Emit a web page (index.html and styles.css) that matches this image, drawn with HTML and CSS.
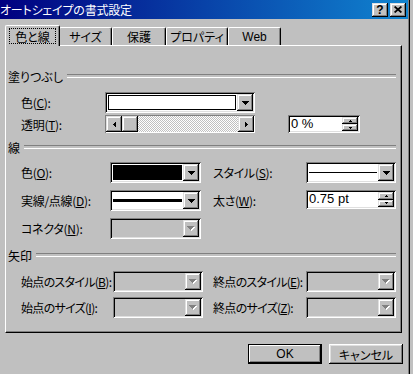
FILE: index.html
```html
<!DOCTYPE html>
<html lang="ja">
<head>
  <meta charset="UTF-8" />
  <meta name="viewport" content="width=device-width, initial-scale=1.0" />
  <title>オートシェイプの書式設定</title>
  <link rel="stylesheet" href="styles.css">
</head>
<body>

  <div class="dialog">
    <div class="titlebar">
      <span class="title">オートシェイプの書式設定</span>
      <div class="caption-buttons">
        <span class="cap-btn help">?</span>
        <span class="cap-btn close">
          <svg width="8" height="7" viewBox="0 0 8 7"><path d="M0.6 0.5 L7.4 6.5 M7.4 0.5 L0.6 6.5" stroke="#000" stroke-width="1.7" /></svg>
        </span>
      </div>
    </div>

    <div class="tabs">
      <div class="tab active"><span class="focus">色と線</span></div>
      <div class="tab t-size">サイズ</div>
      <div class="tab t-lock">保護</div>
      <div class="tab t-prop">プロパティ</div>
      <div class="tab t-web">Web</div>
    </div>

    <div class="panel">
      <div class="group">塗りつぶし</div>

      <div class="row fill-color">
        <label>色(<u>C</u>):</label>
        <div class="combo">
          <span class="swatch white"></span>
          <span class="drop"><svg width="7" height="4" viewBox="0 0 7 4"><path d="M0 0h7v1h-1v1h-1v1h-1v1h-1v-1h-1v-1h-1v-1h-1z" /></svg></span>
        </div>
      </div>

      <div class="row fill-alpha">
        <label>透明(<u>T</u>):</label>
        <div class="scroll">
          <span class="sbtn"><svg width="3" height="5" viewBox="0 0 3 5"><path d="M2 0h1v5h-1v-1h-1v-1h-1v-1h1v-1h1z" /></svg></span>
          <span class="sbtn thumb"></span>
          <span class="track"></span>
          <span class="sbtn"><svg width="3" height="5" viewBox="0 0 3 5"><path d="M0 0h1v1h1v1h1v1h-1v1h-1v1h-1z" /></svg></span>
        </div>
        <span></span>
        <div class="spin">
          <span class="val">0 %</span>
          <span class="arrows">
            <span><svg width="3" height="2" viewBox="0 0 3 2"><path d="M1 0h1v1h1v1h-3v-1h1z" /></svg></span>
            <span><svg width="3" height="2" viewBox="0 0 3 2"><path d="M0 0h3v1h-1v1h-1v-1h-1z" /></svg></span>
          </span>
        </div>
      </div>

      <div class="group line-group">線</div>

      <div class="row line-row first">
        <label>色(<u>O</u>):</label>
        <div class="combo">
          <span class="swatch black"></span>
          <span class="drop"><svg width="7" height="4" viewBox="0 0 7 4"><path d="M0 0h7v1h-1v1h-1v1h-1v1h-1v-1h-1v-1h-1v-1h-1z" /></svg></span>
        </div>
        <span></span>
        <label>スタイル(<u>S</u>):</label>
        <div class="combo">
          <span class="stroke thin"></span>
          <span class="drop"><svg width="7" height="4" viewBox="0 0 7 4"><path d="M0 0h7v1h-1v1h-1v1h-1v1h-1v-1h-1v-1h-1v-1h-1z" /></svg></span>
        </div>
      </div>

      <div class="row line-row">
        <label>実線/点線(<u>D</u>):</label>
        <div class="combo">
          <span class="stroke thick"></span>
          <span class="drop"><svg width="7" height="4" viewBox="0 0 7 4"><path d="M0 0h7v1h-1v1h-1v1h-1v1h-1v-1h-1v-1h-1v-1h-1z" /></svg></span>
        </div>
        <span></span>
        <label>太さ(<u>W</u>):</label>
        <div class="spin weight">
          <span class="val">0.75 pt</span>
          <span class="arrows">
            <span><svg width="3" height="2" viewBox="0 0 3 2"><path d="M1 0h1v1h1v1h-3v-1h1z" /></svg></span>
            <span><svg width="3" height="2" viewBox="0 0 3 2"><path d="M0 0h3v1h-1v1h-1v-1h-1z" /></svg></span>
          </span>
        </div>
      </div>

      <div class="row line-row">
        <label>コネクタ(<u>N</u>):</label>
        <div class="combo disabled">
          <span class="empty"></span>
          <span class="drop"><svg width="8" height="5" viewBox="0 0 8 5"><path fill="#fff" d="M1 1h7v1h-1v1h-1v1h-1v1h-1v-1h-1v-1h-1v-1h-1z" /><path fill="#808080" d="M0 0h7v1h-1v1h-1v1h-1v1h-1v-1h-1v-1h-1v-1h-1z" /></svg></span>
        </div>
      </div>

      <div class="group arrow-group">矢印</div>

      <div class="row arrow-row first">
        <label>始点のスタイル(<u>B</u>):</label>
        <div class="combo disabled">
          <span class="empty"></span>
          <span class="drop"><svg width="8" height="5" viewBox="0 0 8 5"><path fill="#fff" d="M1 1h7v1h-1v1h-1v1h-1v1h-1v-1h-1v-1h-1v-1h-1z" /><path fill="#808080" d="M0 0h7v1h-1v1h-1v1h-1v1h-1v-1h-1v-1h-1v-1h-1z" /></svg></span>
        </div>
        <span></span>
        <label>終点のスタイル(<u>E</u>):</label>
        <div class="combo disabled">
          <span class="empty"></span>
          <span class="drop"><svg width="8" height="5" viewBox="0 0 8 5"><path fill="#fff" d="M1 1h7v1h-1v1h-1v1h-1v1h-1v-1h-1v-1h-1v-1h-1z" /><path fill="#808080" d="M0 0h7v1h-1v1h-1v1h-1v1h-1v-1h-1v-1h-1v-1h-1z" /></svg></span>
        </div>
      </div>

      <div class="row arrow-row second">
        <label>始点のサイズ(<u>I</u>):</label>
        <div class="combo disabled">
          <span class="empty"></span>
          <span class="drop"><svg width="8" height="5" viewBox="0 0 8 5"><path fill="#fff" d="M1 1h7v1h-1v1h-1v1h-1v1h-1v-1h-1v-1h-1v-1h-1z" /><path fill="#808080" d="M0 0h7v1h-1v1h-1v1h-1v1h-1v-1h-1v-1h-1v-1h-1z" /></svg></span>
        </div>
        <span></span>
        <label>終点のサイズ(<u>Z</u>):</label>
        <div class="combo disabled">
          <span class="empty"></span>
          <span class="drop"><svg width="8" height="5" viewBox="0 0 8 5"><path fill="#fff" d="M1 1h7v1h-1v1h-1v1h-1v1h-1v-1h-1v-1h-1v-1h-1z" /><path fill="#808080" d="M0 0h7v1h-1v1h-1v1h-1v1h-1v-1h-1v-1h-1v-1h-1z" /></svg></span>
        </div>
      </div>
    </div>

    <div class="buttons">
      <div class="btn default">OK</div>
      <div class="btn">キャンセル</div>
    </div>
  </div>

</body>
</html>
```

FILE: styles.css
```css
* {
  box-sizing: border-box;
}
body {
  margin: 0;
  width: 413px;
  height: 374px;
  overflow: hidden;
  background: #c0c0c0;
  color: #000;
  font-family: 'Noto Sans CJK JP', sans-serif;
  font-size: 12px;
  font-feature-settings: "palt";
}
u {
  text-decoration-thickness: 1px;
  text-underline-offset: 1px;
}

.dialog {
  width: 410px;
  height: 374px;
  padding-right: 2px;
  box-shadow: inset -1px 0 #000, inset -2px 0 #808080;
}

.titlebar {
  display: flex;
  align-items: center;
  height: 19px;
  padding-right: 2px;
  background: linear-gradient(90deg, #000080, #1084d0);
  color: #fff;
}
.title {
  flex: 1;
  font-size: 12px;
  white-space: nowrap;
  line-height: 19px;
  letter-spacing: -0.2px;
}
.caption-buttons {
  display: flex;
  gap: 2px;
}
.cap-btn {
  display: flex;
  align-items: center;
  justify-content: center;
  width: 16px;
  height: 14px;
  background: #c0c0c0;
  color: #000;
  box-shadow: inset -1px -1px #000, inset 1px 1px #dfdfdf, inset -2px -2px #808080, inset 2px 2px #fff;
}
.help {
  font-family: 'Liberation Sans', sans-serif;
  font-weight: bold;
  font-size: 12px;
  line-height: 14px;
}

/* tabs */
.tabs {
  display: flex;
  align-items: flex-end;
  height: 20px;
  margin-top: 6px;
  padding-left: 7px;
}
.tab {
  display: flex;
  align-items: center;
  justify-content: center;
  height: 18px;
  background: #c0c0c0;
  border-top: 1px solid #fff;
  border-left: 1px solid #fff;
  border-right: 1px solid #000;
  border-radius: 2px 2px 0 0;
  box-shadow: inset -1px 0 #808080;
  white-space: nowrap;
}
.tab.active {
  position: relative;
  z-index: 1;
  width: 55px;
  height: 21px;
  margin: 0 -1px -1px -2px;
}
.focus {
  display: flex;
  align-items: center;
  justify-content: center;
  width: 47px;
  height: 16px;
  border: 1px dotted #000;
}
.t-size { width: 53px; }
.t-lock { width: 54px; }
.t-prop { width: 62px; }
.t-web  { width: 53px; font-family: 'Liberation Sans', sans-serif; }

/* panel */
.panel {
  width: 397px;
  height: 288px;
  margin-left: 5px;
  padding: 22px 5px 0 2px;
  border-top: 1px solid #fff;
  border-left: 1px solid #fff;
  border-right: 1px solid #000;
  border-bottom: 1px solid #000;
  box-shadow: inset -1px -1px #808080;
}
.group {
  display: flex;
  align-items: center;
  gap: 4px;
  height: 16px;
}
.group::after {
  content: "";
  flex: 1;
  height: 2px;
  border-top: 1px solid #808080;
  border-bottom: 1px solid #fff;
}
.line-group { margin-top: 6px; }
.arrow-group { margin-top: 8px; }

.row {
  display: grid;
  align-items: center;
  height: 21px;
  padding-left: 13px;
}
.row label {
  white-space: nowrap;
  letter-spacing: -0.3px;
}
.fill-color {
  margin-top: 8px;
  grid-template-columns: 84px 150px;
}
.fill-alpha {
  margin-top: 2px;
  height: 18px;
  grid-template-columns: 84px 150px 33px 72px;
}
.line-row {
  margin-top: 7px;
  grid-template-columns: 89px 91px 12px 93px 90px;
}
.arrow-row {
  grid-template-columns: 92px 90px 10px 93px 90px;
}
.arrow-row label {
  letter-spacing: -0.7px;
}
.arrow-row.first { margin-top: 8px; }
.arrow-row.second { margin-top: 5px; }

/* controls */
.combo {
  display: flex;
  height: 21px;
  padding: 2px;
  background: #fff;
  box-shadow: inset 1px 1px #808080, inset -1px -1px #fff, inset 2px 2px #000, inset -2px -2px #dfdfdf;
}
.combo.disabled {
  background: #c0c0c0;
}
.swatch {
  flex: 1;
  margin: 1px;
  border: 1px solid #000;
}
.swatch.white { background: #fff; }
.swatch.black { background: #000; }
.stroke {
  flex: 1;
  align-self: center;
  margin: 0 1px;
  background: #000;
}
.stroke.thin { height: 1px; }
.stroke.thick { height: 3px; }
.empty {
  flex: 1;
}
.drop {
  display: flex;
  align-items: center;
  justify-content: center;
  width: 16px;
  background: #c0c0c0;
  box-shadow: inset -1px -1px #000, inset 1px 1px #dfdfdf, inset -2px -2px #808080, inset 2px 2px #fff;
}

.scroll {
  display: flex;
  align-self: end;
  height: 18px;
  padding: 1px;
  box-shadow: inset 1px 1px #808080, inset -1px -1px #fff;
}
.sbtn {
  display: flex;
  align-items: center;
  justify-content: center;
  width: 16px;
  background: #c0c0c0;
  box-shadow: inset -1px -1px #000, inset 1px 1px #dfdfdf, inset -2px -2px #808080, inset 2px 2px #fff;
}
.track {
  flex: 1;
  background: repeating-conic-gradient(#fff 0 25%, #c0c0c0 0 50%) 0 0 / 2px 2px;
}

.spin {
  display: flex;
  height: 18px;
  padding: 2px;
  background: #fff;
  box-shadow: inset 1px 1px #808080, inset -1px -1px #fff, inset 2px 2px #000, inset -2px -2px #dfdfdf;
}
.spin.weight {
  height: 19px;
  align-self: start;
}
.spin .val {
  flex: 1;
  padding-left: 1px;
  line-height: 14px;
  font-family: 'Liberation Sans', sans-serif;
  font-size: 13px;
}
.arrows {
  display: flex;
  flex-direction: column;
  width: 16px;
}
.arrows span {
  flex: 1;
  display: flex;
  align-items: center;
  justify-content: center;
  background: #c0c0c0;
  box-shadow: inset -1px -1px #000, inset 1px 1px #dfdfdf, inset -2px -2px #808080, inset 2px 2px #fff;
}

/* bottom buttons */
.buttons {
  display: flex;
  justify-content: flex-end;
  gap: 7px;
  margin-top: 11px;
  padding-right: 5px;
}
.btn {
  display: flex;
  align-items: center;
  justify-content: center;
  width: 74px;
  height: 20px;
  background: #c0c0c0;
  box-shadow: inset -1px -1px #000, inset 1px 1px #fff, inset -2px -2px #808080, inset 2px 2px #dfdfdf;
}
.btn.default {
  border: 1px solid #000;
  box-shadow: inset -1px -1px #000, inset 1px 1px #fff, inset -2px -2px #808080;
  font-family: 'Liberation Sans', sans-serif;
  font-size: 12px;
}
```
